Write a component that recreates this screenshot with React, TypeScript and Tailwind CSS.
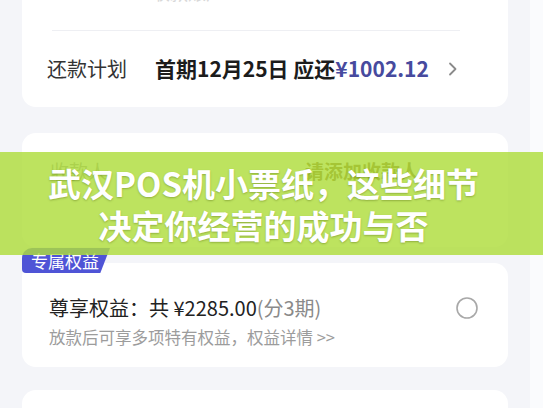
import React from "react";

const cjk = "font-['Noto_Sans_CJK_SC','Noto_Sans',sans-serif]";

function Chevron() {
  return (
    <svg width="10" height="16" viewBox="0 0 10 16" className="shrink-0">
      <path d="M2 2.5 L7.5 8 L2 13.5" fill="none" stroke="#8a8a8a" strokeWidth="1.8" strokeLinecap="round" strokeLinejoin="round" />
    </svg>
  );
}

function Radio() {
  return (
    <svg width="24" height="24" viewBox="0 0 24 24" className="shrink-0">
      <circle cx="12" cy="12" r="10" fill="none" stroke="#a8a8a8" strokeWidth="1.6" />
    </svg>
  );
}

export default function App() {
  return (
    <div className={`relative w-[543px] h-[408px] overflow-hidden flex bg-[#fafbfd] ${cjk}`}>
      <div className="w-[530px] shrink-0 bg-[#f4f5f9] px-[22px] flex flex-col">
        {/* repayment card */}
        <div className="shrink-0 -mt-[14px] bg-white rounded-[14px] flex flex-col">
          <div className="h-[45px] ml-[30px] mr-[48px] border-b border-[#eeeff3] flex items-start text-[18px] text-[#d8d8d8] leading-[12px] overflow-hidden">
            <span className="ml-[100px]">收款账户</span>
          </div>
          <div className="h-[76px] flex items-center pl-[25px] pr-[50px]">
            <span className="text-[20px] text-[#333] w-[108px]">还款计划</span>
            <span className="text-[21px] font-bold text-[#1c1c1c]">
              首期12月25日 应还<span className="text-[#474a9e]">¥1002.12</span>
            </span>
            <div className="ml-auto">
              <Chevron />
            </div>
          </div>
        </div>

        {/* payee card (mostly under banner) */}
        <div className="shrink-0 mt-[26px] h-[114px] bg-white rounded-[14px] flex items-start pt-[24px] pl-[28px] text-[19px]">
          <span className="text-[#9a9a9a] w-[255px]">收款人</span>
          <span className="text-[#7a5a1a] font-bold">请添加收款人</span>
        </div>

        {/* benefits card */}
        <div className="shrink-0 relative mt-[16px] h-[104px] bg-white rounded-[14px] flex flex-col pl-[27px] pr-[29px] pt-[32px]">
          <div className="absolute -top-[15px] left-0 h-[25px] w-[88px] bg-[#4f54d6] rounded-tl-[10px] rounded-bl-[4px] [clip-path:polygon(0_0,100%_0,89%_100%,0_100%)] flex items-center pl-[9px] text-white text-[17px] leading-none">
            专属权益
          </div>
          <div className="flex items-center">
            <span className="text-[20px] text-[#222] leading-[26px]">
              尊享权益：共 ¥2285.00<span className="text-[#8a8a8a]">(分3期)</span>
            </span>
            <div className="ml-auto">
              <Radio />
            </div>
          </div>
          <div className="mt-[5px] text-[16.5px] text-[#9c9c9c] leading-[22px]">放款后可享多项特有权益，权益详情 &gt;&gt;</div>
        </div>

        {/* next card */}
        <div className="shrink-0 mt-[23px] h-[60px] bg-white rounded-[14px]" />
      </div>

      {/* title banner overlay */}
      <div className="absolute left-0 right-0 top-[152px] h-[103px] bg-[rgba(175,221,60,0.82)] flex flex-col items-center justify-center pr-[16px] text-white font-bold text-[33px] leading-[42px] [text-shadow:0_1px_2px_rgba(60,80,0,0.35)]">
        <div>武汉POS机小票纸，这些细节</div>
        <div>决定你经营的成功与否</div>
      </div>
    </div>
  );
}
